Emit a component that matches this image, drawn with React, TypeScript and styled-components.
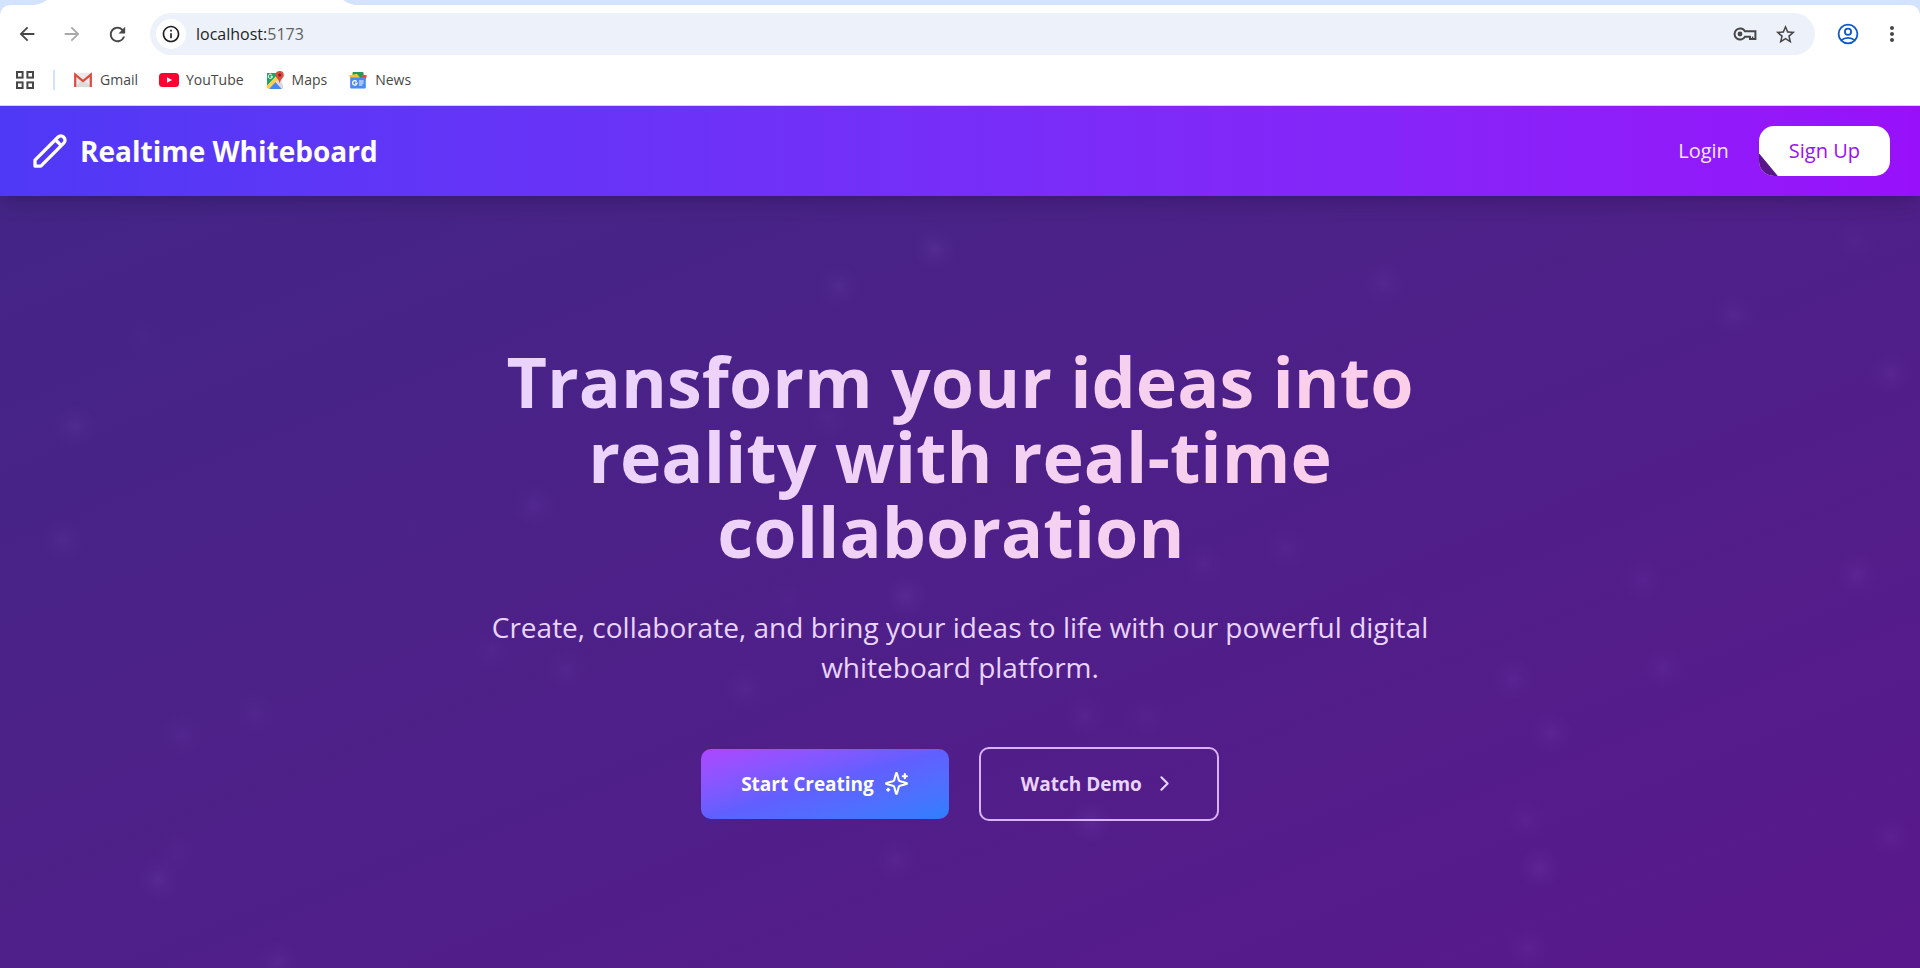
import React from "react";
import styled, { createGlobalStyle } from "styled-components";
import { ChevronRight } from "lucide-react";
import {
  MdArrowBack,
  MdArrowForward,
  MdRefresh,
  MdInfoOutline,
  MdStarBorder,
  MdMoreVert,
} from "react-icons/md";

const GlobalStyle = createGlobalStyle`
  *, *::before, *::after { box-sizing: border-box; }
  body {
    margin: 0;
    font-family: "Open Sans", "Noto Sans", sans-serif;
  }
  button { font-family: inherit; cursor: pointer; }
`;

const Page = styled.div`
  display: flex;
  flex-direction: column;
  min-height: 100vh;
`;

/* ---------- Browser window ---------- */

const Chrome = styled.div`
  background: #d3e3fd;
  border-bottom: 1px solid #d4d7e2;
`;

const TabStrip = styled.div`
  display: flex;
  height: 5px;
`;

const ActiveTab = styled.div`
  width: 320px;
  margin-left: 35px;
  background: #fff;
  clip-path: polygon(12px 0, calc(100% - 12px) 0, calc(100% - 7px) 3px, 100% 5px, 0 5px, 7px 3px);
`;

const Toolbar = styled.div`
  display: flex;
  align-items: center;
  padding: 8px 16px;
  background: #fff;
  border-radius: 10px 10px 0 0;
`;

const NavButtons = styled.div`
  display: flex;
  gap: 23px;
  margin-right: 21px;
`;

const IconButton = styled.button<{ $tone?: string }>`
  display: flex;
  align-items: center;
  justify-content: center;
  padding: 0;
  border: 0;
  background: none;
  color: ${(p) => p.$tone ?? "#474747"};
`;

const Omnibox = styled.div`
  display: flex;
  flex: 1;
  align-items: center;
  gap: 10px;
  height: 42px;
  padding: 0 18px 0 6px;
  border-radius: 21px;
  background: #ecf1fa;
`;

const SiteInfo = styled(IconButton)`
  width: 30px;
  height: 30px;
  border-radius: 50%;
  background: #fff;
`;

const Address = styled.div`
  flex: 1;
  color: #5f6368;
  font-size: 16px;
  line-height: 24px;
`;

const Host = styled.span`
  color: #1f1f1f;
`;

const OmniboxActions = styled.div`
  display: flex;
  align-items: center;
  gap: 17px;
`;

const WindowActions = styled.div`
  display: flex;
  align-items: center;
  gap: 21px;
  margin-left: 22px;
`;

const Bookmarks = styled.nav`
  display: flex;
  align-items: center;
  height: 42px;
  padding: 0 16px 8px;
  background: #fff;
`;

const Divider = styled.span`
  width: 2px;
  height: 20px;
  margin: 0 18px 0 19px;
  background: #d3e3fd;
`;

const BookmarkList = styled.div`
  display: flex;
  gap: 21px;
`;

const Bookmark = styled.a`
  display: flex;
  align-items: center;
  gap: 7px;
  color: #474747;
  font-size: 14px;
  line-height: 20px;
  text-decoration: none;
`;

/* ---------- Site header ---------- */

const Header = styled.header`
  position: relative;
  z-index: 1;
  display: flex;
  align-items: center;
  justify-content: space-between;
  height: 90px;
  padding: 0 30px;
  background: linear-gradient(to right in oklab, #4f39f6, #9810fa);
  box-shadow: 0 12px 19px -4px rgba(0, 0, 0, 0.14), 0 5px 8px -5px rgba(0, 0, 0, 0.1);
  color: #fff;
`;

const Brand = styled.a`
  display: flex;
  align-items: center;
  gap: 10px;
  color: inherit;
  font-size: 28px;
  font-weight: 700;
  line-height: 40px;
  text-decoration: none;
`;

const HeaderActions = styled.nav`
  display: flex;
  align-items: center;
  gap: 30px;
`;

const LoginLink = styled.a`
  color: #f3e8ff;
  font-size: 20px;
  line-height: 30px;
  text-decoration: none;
`;

const SignUp = styled.button`
  position: relative;
  overflow: hidden;
  height: 50px;
  padding: 0 30px;
  border: 0;
  border-radius: 15px;
  background: #fff;
  color: #9810fa;
  font-size: 20px;
  font-weight: 500;
  line-height: 30px;

  &::before {
    content: "";
    position: absolute;
    left: 0;
    bottom: 0;
    width: 19px;
    height: 23px;
    background: #59168b;
    clip-path: polygon(0 0, 100% 100%, 0 100%);
  }
`;

/* ---------- Hero ---------- */

const Hero = styled.main`
  position: relative;
  display: flex;
  flex: 1;
  flex-direction: column;
  align-items: center;
  justify-content: center;
  overflow: hidden;
  padding: 40px;
  background: linear-gradient(to bottom right in oklab, #432586, #59188b);
`;

const Particle = styled.span`
  position: absolute;
  width: 44px;
  height: 44px;
  margin: -22px 0 0 -22px;
  border-radius: 50%;
  background: radial-gradient(closest-side, rgba(180, 140, 255, 0.1), rgba(180, 140, 255, 0.04) 45%, transparent);
`;

const HeroContent = styled.div`
  position: relative;
  display: flex;
  flex-direction: column;
  align-items: center;
  max-width: 960px;
  text-align: center;
`;

const Title = styled.h1`
  width: 100%;
  margin: 0 0 38px;
  background: linear-gradient(to right in oklab, #e9d4ff, #fccee8);
  background-clip: text;
  -webkit-background-clip: text;
  color: transparent;
  font-size: 70px;
  font-weight: 700;
  line-height: 75px;
`;

const Lead = styled.p`
  margin: 0 0 60px;
  color: #e9d4ff;
  font-size: 28px;
  line-height: 40px;
`;

const Actions = styled.div`
  display: flex;
  align-items: center;
  gap: 30px;
`;

const ActionButton = styled.button<{ $outlined?: boolean }>`
  display: flex;
  align-items: center;
  gap: 10px;
  padding: 20px 40px;
  border: ${(p) => (p.$outlined ? "2px solid #dab2ff" : "0")};
  border-radius: 10px;
  background: ${(p) =>
    p.$outlined ? "transparent" : "linear-gradient(to bottom right in oklab, #ad46ff, #615fff, #2b7fff)"};
  color: ${(p) => (p.$outlined ? "#e9d4ff" : "#fff")};
  font-size: 19px;
  font-weight: 700;
  line-height: 30px;
`;

type Dot = [x: number, y: number, strength: number];

/* Horizontal and vertical position in percent, then opacity. */
const particles: Dot[] = [
  [48.7, 6.9, 0.9], [43.7, 11.7, 0.7], [7.4, 18.3, 0.2], [3.9, 29.8, 0.7],
  [3.3, 44.5, 0.6], [27.8, 40.2, 0.6], [21.4, 43.3, 0.1], [43.2, 28.8, 0.4],
  [47.2, 51.8, 0.9], [41, 52.3, 0.2], [25.6, 58.8, 0.4], [29.5, 61.3, 0.5],
  [38.8, 63.9, 0.5], [13.3, 67, 0.4], [9.5, 69.8, 0.5], [9.2, 85.1, 0.3],
  [8.3, 88.6, 0.8], [14.5, 99.2, 0.7], [46.6, 86, 0.6], [72.1, 11.3, 0.6],
  [90.3, 15.4, 0.6], [98.5, 22.9, 0.7], [96.6, 6, 0.3], [67, 45.6, 0.5],
  [62.7, 47.7, 0.5], [72.7, 53.2, 0.2], [85.5, 49.7, 0.5], [96.7, 49, 0.7],
  [86.6, 61.1, 0.6], [78.8, 62.6, 0.7], [80.8, 69.6, 0.7], [56.5, 67.4, 0.5],
  [59.7, 67.5, 0.4], [56.8, 81.1, 0.9], [79.5, 80.8, 0.5], [80.2, 87, 0.9],
  [79.6, 97.4, 0.6], [98.5, 83, 0.6],
];

/* ---------- Drawings ---------- */

const KeyIcon = () => (
  <svg width="24" height="16" viewBox="0 0 24 16" fill="none" stroke="currentColor" strokeWidth="2" aria-hidden="true">
    <path d="M12 5.2A5.6 5.6 0 1 0 12 10.8H17V13H22.4V5.2Z" />
    <circle cx="7" cy="8" r="2.4" fill="currentColor" stroke="none" />
    <path d="M19.6 13V10.6" strokeWidth="1.4" />
  </svg>
);

const ProfileIcon = () => (
  <svg width="22" height="22" viewBox="0 0 22 22" fill="none" stroke="currentColor" strokeWidth="1.8" aria-hidden="true">
    <circle cx="11" cy="11" r="9.4" />
    <circle cx="11" cy="8.8" r="3.1" />
    <path d="M4.4 17.2C6.2 15.6 8.4 14.8 11 14.8S15.8 15.6 17.6 17.2" />
  </svg>
);

const AppsIcon = () => (
  <svg width="18" height="18" viewBox="0 0 18 18" fill="none" stroke="currentColor" strokeWidth="2" aria-hidden="true">
    <rect x="1" y="1" width="5.6" height="5.6" />
    <rect x="11.4" y="1" width="5.6" height="5.6" />
    <rect x="1" y="11.4" width="5.6" height="5.6" />
    <rect x="11.4" y="11.4" width="5.6" height="5.6" />
  </svg>
);

const GmailIcon = () => (
  <svg width="20" height="16" viewBox="0 0 20 16" aria-hidden="true">
    <rect x="1" y="1" width="18" height="14" rx="1" fill="#ebe9e9" />
    <path d="M1 15 10 8l9 7Z" fill="#dcdada" />
    <path d="M2.2 15V2.6L10 9l7.8-6.4V15" fill="none" stroke="#dd4b3e" strokeWidth="2.2" />
  </svg>
);

const YouTubeIcon = () => (
  <svg width="20" height="14" viewBox="0 0 20 14" aria-hidden="true">
    <rect width="20" height="14" rx="3.5" fill="#ff0033" />
    <path d="M8 4.2v5.6L13 7Z" fill="#fff" />
  </svg>
);

const MapsIcon = () => (
  <svg width="20" height="20" viewBox="0 0 20 20" aria-hidden="true">
    <path d="M2 3H17V18H2Z" fill="#e8e8e8" />
    <path d="M2 3H14L2 16Z" fill="#1fa463" />
    <path d="M1.5 16 13 4.5l3 3L4.5 18.5H2Z" fill="#ffd04b" />
    <path d="M4 19 10.5 12 17 19Z" fill="#4688f1" />
    <path d="M10.5 12 13 9.5 18 14.5V18.5L17 19Z" fill="#dadada" />
    <path d="M7.4 6.3A2.1 2.1 0 1 1 6.7 4.7M5.6 6.3H7.4" fill="none" stroke="#fff" strokeWidth="1" />
    <path d="M14.7 1A4.1 4.1 0 0 0 10.6 5C10.6 8 14 9 14.7 13.5 15.4 9 18.8 8 18.8 5A4.1 4.1 0 0 0 14.7 1Z" fill="#de4b3e" />
    <circle cx="14.7" cy="5" r="1.5" fill="#7b231c" />
  </svg>
);

const NewsIcon = () => (
  <svg width="20" height="18" viewBox="0 0 20 18" aria-hidden="true">
    <rect x="4.5" y="1" width="11" height="8" rx="1" fill="#1e9b57" />
    <path d="M1 4.5 9 2.8 13 8H2.5Z" fill="#fbc02d" />
    <path d="M19 4.5 14.5 3.5 13 8H17.8Z" fill="#e5493a" />
    <rect x="2.2" y="6.4" width="15.6" height="11.1" rx="1" fill="#4a8af4" />
    <path d="M8.6 10.6A2.2 2.2 0 1 0 9 12.2H7" fill="none" stroke="#fff" strokeWidth="1.3" />
    <path d="M11 10H15.6M11 12H15.6M11 14H14.4" stroke="#fff" strokeWidth="1.1" />
  </svg>
);

const PencilLogo = () => (
  <svg
    width="40"
    height="40"
    viewBox="0 0 24 24"
    fill="none"
    stroke="currentColor"
    strokeWidth="2"
    strokeLinecap="round"
    strokeLinejoin="round"
    aria-hidden="true"
  >
    <path d="M15.232 5.232l3.536 3.536M16.732 3.732a2.5 2.5 0 1 1 3.536 3.536L6.5 21.036H3v-3.572L16.732 3.732Z" />
  </svg>
);

const SparklesIcon = () => (
  <svg
    width="25"
    height="25"
    viewBox="0 0 24 24"
    fill="none"
    stroke="currentColor"
    strokeWidth="2"
    strokeLinecap="round"
    strokeLinejoin="round"
    aria-hidden="true"
  >
    <path d="M9.937 15.5A2 2 0 0 0 8.5 14.063l-6.135-1.582a.5.5 0 0 1 0-.962L8.5 9.936A2 2 0 0 0 9.937 8.5l1.582-6.135a.5.5 0 0 1 .963 0L14.063 8.5A2 2 0 0 0 15.5 9.937l6.135 1.581a.5.5 0 0 1 0 .964L15.5 14.063a2 2 0 0 0-1.437 1.437l-1.582 6.135a.5.5 0 0 1-.963 0z" />
    <path d="M20 3v4M22 5h-4M4 17v2M5 18H3" />
  </svg>
);

const bookmarks = [
  { label: "Gmail", icon: <GmailIcon /> },
  { label: "YouTube", icon: <YouTubeIcon /> },
  { label: "Maps", icon: <MapsIcon /> },
  { label: "News", icon: <NewsIcon /> },
];

export default function App() {
  return (
    <Page>
      <GlobalStyle />
      <Chrome>
        <TabStrip>
          <ActiveTab />
        </TabStrip>
        <Toolbar>
          <NavButtons>
            <IconButton aria-label="Back"><MdArrowBack size={22} /></IconButton>
            <IconButton aria-label="Forward" $tone="#a9a9a9"><MdArrowForward size={22} /></IconButton>
            <IconButton aria-label="Reload"><MdRefresh size={23} /></IconButton>
          </NavButtons>
          <Omnibox>
            <SiteInfo aria-label="Site information" $tone="#1f1f1f"><MdInfoOutline size={20} /></SiteInfo>
            <Address><Host>localhost:</Host>5173</Address>
            <OmniboxActions>
              <IconButton aria-label="Passwords"><KeyIcon /></IconButton>
              <IconButton aria-label="Bookmark this page"><MdStarBorder size={23} /></IconButton>
            </OmniboxActions>
          </Omnibox>
          <WindowActions>
            <IconButton aria-label="Profile" $tone="#0b57d0"><ProfileIcon /></IconButton>
            <IconButton aria-label="Menu"><MdMoreVert size={24} /></IconButton>
          </WindowActions>
        </Toolbar>
        <Bookmarks aria-label="Bookmarks">
          <IconButton aria-label="Apps"><AppsIcon /></IconButton>
          <Divider />
          <BookmarkList>
            {bookmarks.map((b) => (
              <Bookmark key={b.label} href="#">{b.icon}{b.label}</Bookmark>
            ))}
          </BookmarkList>
        </Bookmarks>
      </Chrome>

      <Header>
        <Brand href="#"><PencilLogo />Realtime Whiteboard</Brand>
        <HeaderActions>
          <LoginLink href="#">Login</LoginLink>
          <SignUp>Sign Up</SignUp>
        </HeaderActions>
      </Header>

      <Hero>
        {particles.map(([x, y, strength]) => (
          <Particle key={`${x}-${y}`} style={{ left: `${x}%`, top: `${y}%`, opacity: strength }} />
        ))}
        <HeroContent>
          <Title>Transform your ideas into reality with real-time collaboration{"\u00a0"}</Title>
          <Lead>
            Create, collaborate, and bring your ideas to life with our powerful digital whiteboard platform.
          </Lead>
          <Actions>
            <ActionButton>Start Creating<SparklesIcon /></ActionButton>
            <ActionButton $outlined>Watch Demo<ChevronRight size={25} /></ActionButton>
          </Actions>
        </HeroContent>
      </Hero>
    </Page>
  );
}
